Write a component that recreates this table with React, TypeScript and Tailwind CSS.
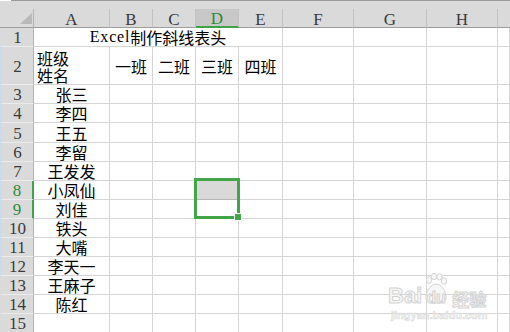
import clsx from 'clsx';

type Col = { key: string; w: string };

const cols: Col[] = [
  { key: 'A', w: 'w-[76px]' },
  { key: 'B', w: 'w-[43px]' },
  { key: 'C', w: 'w-[43px]' },
  { key: 'D', w: 'w-[43px]' },
  { key: 'E', w: 'w-[44px]' },
  { key: 'F', w: 'w-[71px]' },
  { key: 'G', w: 'w-[73px]' },
  { key: 'H', w: 'w-[71px]' },
  { key: '', w: 'flex-1' },
];

const names = ['张三', '李四', '王五', '李留', '王发发', '小凤仙', '刘佳', '铁头', '大嘴', '李天一', '王麻子', '陈红', ''];

const serif = "[font-family:'Liberation_Serif','Noto_Sans_CJK_SC',serif]";
const cjk = "[font-family:'Noto_Sans_CJK_SC',sans-serif] text-[16px] leading-[16px] text-black";

function RowHead({ n, active, blue }: { n: number; active?: boolean; blue?: boolean }) {
  return (
    <div
      className={clsx(
        'w-[34px] shrink-0 flex items-center justify-center bg-[#dadada] border-b border-b-[#ebebeb] border-l-2 text-[17px] leading-none pt-[1px]',
        serif,
        blue ? 'border-l-[#c9dcef]' : 'border-l-[#dadada]',
        active ? 'border-r-2 border-r-[#3fa447] text-[#2f8a37]' : 'border-r border-r-[#b2b2b2] text-[#3a3a3a]'
      )}
    >
      {n}
    </div>
  );
}

function Cell({ col, className, children }: { col: Col; className?: string; children?: React.ReactNode }) {
  return (
    <div
      className={clsx(
        'shrink-0 border-r border-b border-[#d4d4d4] flex items-center justify-center',
        col.w,
        className
      )}
    >
      {children}
    </div>
  );
}

function Watermark() {
  return (
    <div className="absolute left-[388px] top-[273px] flex flex-col items-start pointer-events-none">
      <div className="flex items-end h-[34px]">
        <span className="[font-family:'Liberation_Sans',sans-serif] font-bold text-[22px] leading-none text-[#f7f7f7] [-webkit-text-stroke:1px_#d4d4d4]">
          Bai
        </span>
        <div className="relative w-[28px] h-[34px]">
          <svg className="absolute left-[2px] top-0" width="24" height="34" viewBox="0 0 24 34">
            <g fill="#f7f7f7" stroke="#d4d4d4" strokeWidth="1">
              <ellipse cx="5" cy="7" rx="2.6" ry="3.4" />
              <ellipse cx="10" cy="3.5" rx="2.6" ry="3.2" />
              <ellipse cx="15.5" cy="3.8" rx="2.6" ry="3.2" />
              <ellipse cx="20" cy="8" rx="2.6" ry="3.4" />
              <path d="M12 11 C7 11 3 17 2 23 C1 29 6 31 12 30 C18 31 23 29 22 23 C21 17 17 11 12 11 Z" />
            </g>
          </svg>
          <span className="absolute left-[4px] bottom-[1px] [font-family:'Liberation_Sans',sans-serif] font-bold text-[16px] leading-none text-[#f7f7f7] [-webkit-text-stroke:1px_#d4d4d4]">
            du
          </span>
        </div>
        <span className="ml-[2px] [font-family:'Noto_Sans_CJK_SC',sans-serif] font-bold text-[17px] leading-none text-[#f7f7f7] [-webkit-text-stroke:1px_#d4d4d4]">
          经验
        </span>
      </div>
      <span className="mt-[3px] ml-[3px] [font-family:'Liberation_Sans',sans-serif] font-bold text-[11px] leading-none text-[#f3f3f3] [-webkit-text-stroke:0.5px_#d8d8d8]">
        jingyan.baidu.com
      </span>
    </div>
  );
}

export default function App() {
  return (
    <div className="relative w-[510px] h-[332px] overflow-hidden bg-white">
      {/* top band */}
      <div className="h-[9px] bg-[#dadada] flex flex-col">
        <div className="flex h-[1px]">
          <div className="w-[11px] bg-white" />
          <div className="flex-1 bg-[#9a9a9a]" />
        </div>
      </div>

      {/* column header */}
      <div className="flex h-[19px] bg-[#dadada]">
        <div className="relative w-[34px] shrink-0 border-r border-r-[#b2b2b2] border-b border-b-[#9d9d9d]">
          <svg className="absolute left-[20px] top-[4px]" width="12" height="11" viewBox="0 0 12 11">
            <polygon points="12,0 12,11 0,11" fill="#b9b9b9" />
          </svg>
        </div>
        {cols.map((c) => (
          <div
            key={c.key || 'last'}
            className={clsx(
              'shrink-0 flex items-center justify-center text-[17px] leading-none pt-[2px]',
              serif,
              c.w,
              c.key ? 'border-r border-r-[#c2c2c2]' : '',
              c.key === 'D'
                ? 'bg-[#c8c8c8] text-[#2f8a37] border-b-2 border-b-[#3fa447]'
                : 'text-[#3a3a3a] border-b border-b-[#9d9d9d]'
            )}
          >
            {c.key}
          </div>
        ))}
      </div>

      {/* row 1 */}
      <div className="flex h-[19px]">
        <RowHead n={1} />
        <div className="w-[249px] shrink-0 border-r border-b border-[#d4d4d4] flex items-center justify-center">
          <span className={clsx(serif, 'text-[16px] tracking-[0.8px] leading-[16px] text-black')}>Excel</span>
          <span className={cjk}>制作斜线表头</span>
        </div>
        {cols.slice(5).map((c) => (
          <Cell key={c.key || 'last'} col={c} />
        ))}
      </div>

      {/* row 2 */}
      <div className="flex h-[38px]">
        <RowHead n={2} blue />
        {cols.map((c, i) =>
          i === 0 ? (
            <div
              key="A"
              className={clsx(
                'shrink-0 border-r border-b border-[#d4d4d4] flex flex-col justify-end items-start gap-[1px] pl-[3px] pb-[1px]',
                c.w
              )}
            >
              <span className={cjk}>班级</span>
              <span className={cjk}>姓名</span>
            </div>
          ) : (
            <Cell key={c.key || 'last'} col={c}>
              {i <= 4 ? <span className={cjk}>{['一班', '二班', '三班', '四班'][i - 1]}</span> : null}
            </Cell>
          )
        )}
      </div>

      {/* rows 3..15 */}
      {names.map((name, idx) => {
        const n = idx + 3;
        return (
          <div key={n} className={clsx('flex', n === 5 ? 'h-[20px]' : 'h-[19px]')}>
            <RowHead n={n} active={n === 8 || n === 9} blue={n <= 12} />
            {cols.map((c, i) => (
              <Cell
                key={c.key || 'last'}
                col={c}
                className={n === 8 && c.key === 'D' ? 'bg-[#d9d9d9] border-b-[#b5b5b5]' : ''}
              >
                {i === 0 && name ? <span className={cjk}>{name}</span> : null}
              </Cell>
            ))}
          </div>
        );
      })}

      {/* selection D8:D9 */}
      <div className="absolute left-[194px] top-[178px] w-[46px] h-[41px] border-[3px] border-[#42a547] pointer-events-none" />
      <div className="absolute left-[234px] top-[213px] w-[8px] h-[8px] bg-[#42a547] border border-white" />

      <Watermark />
    </div>
  );
}
